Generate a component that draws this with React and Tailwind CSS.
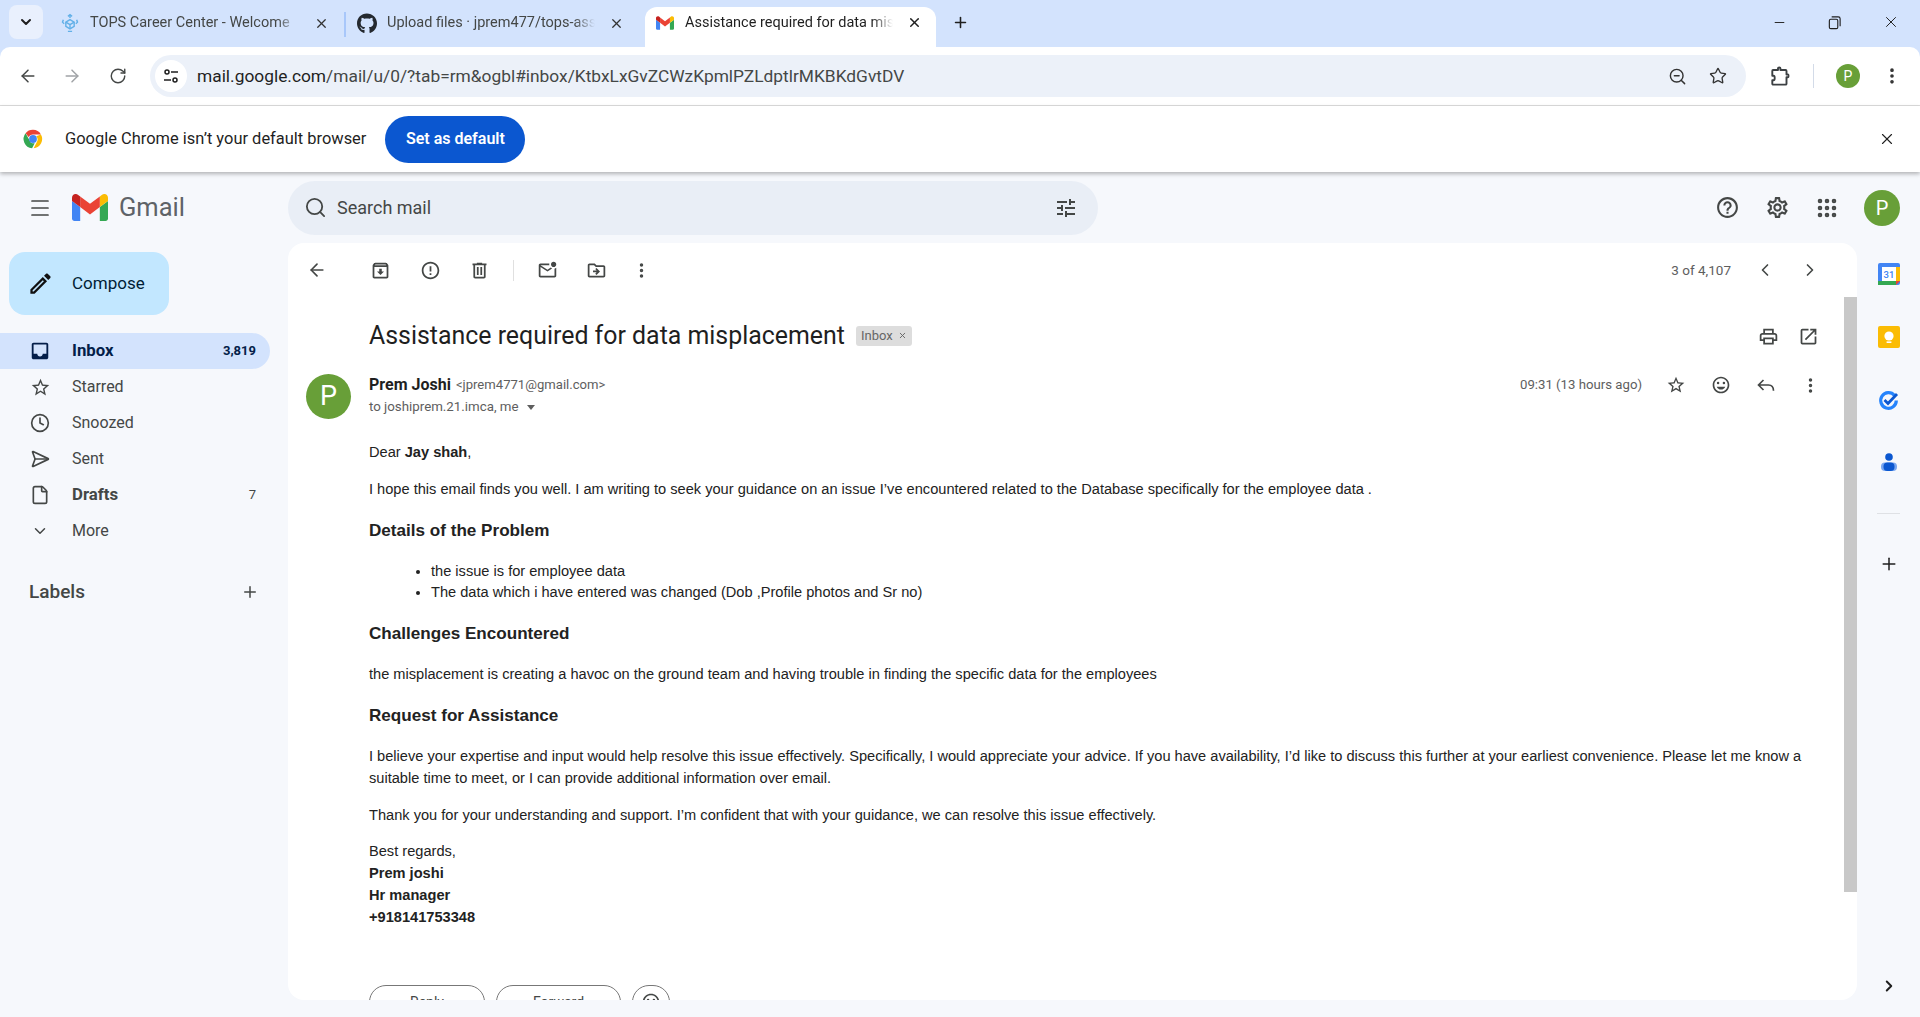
import { FaGithub } from 'react-icons/fa'
import { Plus, X, ChevronDown, ArrowLeft, ArrowRight, RotateCw, Minus, Search, ZoomOut, Star, ChevronLeft, ChevronRight, Menu, Clock, SendHorizontal, File, EllipsisVertical, Grip } from 'lucide-react'

const roboto = { fontFamily: 'Roboto, sans-serif' }

function Mat({ d, size = 24, className = '', children }) {
  return (
    <svg viewBox="0 0 24 24" width={size} height={size} className={`shrink-0 fill-current ${className}`}>
      {d && <path d={d} />}
      {children}
    </svg>
  )
}

const ICONS = {
  archive: 'M20.54 5.23l-1.39-1.68C18.88 3.21 18.47 3 18 3H6c-.47 0-.88.21-1.16.55L3.46 5.23C3.17 5.57 3 6.02 3 6.5V19c0 1.1.9 2 2 2h14c1.1 0 2-.9 2-2V6.5c0-.48-.17-.93-.46-1.27zM6.24 5h11.52l.81.97H5.44l.8-.97zM5 19V8h14v11H5zm8.45-9h-2.9v3H8l4 4 4-4h-2.55z',
  report: 'M12 2C6.48 2 2 6.48 2 12s4.48 10 10 10 10-4.48 10-10S17.52 2 12 2zm0 18c-4.41 0-8-3.59-8-8s3.59-8 8-8 8 3.59 8 8-3.59 8-8 8zm-1-5h2v2h-2zm0-8h2v6h-2z',
  trash: 'M15 4V3H9v1H4v2h1v13c0 1.1.9 2 2 2h10c1.1 0 2-.9 2-2V6h1V4h-5zm2 15H7V6h10v13zM9 8h2v9H9zm4 0h2v9h-2z',
  unread: 'M22 8.98V18c0 1.1-.9 2-2 2H4c-1.1 0-2-.9-2-2V6c0-1.1.9-2 2-2h10.1c-.06.32-.1.66-.1 1s.04.68.1 1H4l8 5 3.67-2.29c.47.43 1.02.76 1.63.98L12 13 4 8v10h16V9.9c.74-.15 1.42-.48 2-.92zM16 5c0 1.66 1.34 3 3 3s3-1.34 3-3-1.34-3-3-3-3 1.34-3 3z',
  move: 'M20 6h-8l-2-2H4c-1.1 0-1.99.9-1.99 2L2 18c0 1.1.9 2 2 2h16c1.1 0 2-.9 2-2V8c0-1.1-.9-2-2-2zm0 12H4V6h5.17l2 2H20v10zm-7.84-6H8v2h4.16l-1.59 1.59L12 17l4-4-4-4-1.41 1.41z',
  print: 'M19 8h-1V3H6v5H5c-1.66 0-3 1.34-3 3v6h4v4h12v-4h4v-6c0-1.66-1.34-3-3-3zM8 5h8v3H8V5zm8 12v2H8v-4h8v2zm2-2v-2H6v2H4v-4c0-.55.45-1 1-1h14c.55 0 1 .45 1 1v4h-2z',
  open: 'M19 19H5V5h7V3H5a2 2 0 00-2 2v14a2 2 0 002 2h14c1.1 0 2-.9 2-2v-7h-2v7zM14 3v2h3.59l-9.83 9.83 1.41 1.41L19 6.41V10h2V3h-7z',
  star: 'M22 9.24l-7.19-.62L12 2 9.19 8.63 2 9.24l5.46 4.73L5.82 21 12 17.27 18.18 21l-1.63-7.03L22 9.24zM12 15.4l-3.76 2.27 1-4.28-3.32-2.88 4.38-.38L12 6.1l1.71 4.04 4.38.38-3.32 2.88 1 4.28L12 15.4z',
  smile: 'M11.99 2C6.47 2 2 6.48 2 12s4.47 10 9.99 10C17.52 22 22 17.52 22 12S17.52 2 11.99 2zM12 20c-4.42 0-8-3.58-8-8s3.58-8 8-8 8 3.58 8 8-3.58 8-8 8zm3.5-9a1.5 1.5 0 100-3 1.5 1.5 0 000 3zm-7 0a1.5 1.5 0 100-3 1.5 1.5 0 000 3zm3.5 6.5c2.33 0 4.3-1.46 5.11-3.5H6.89c.8 2.04 2.78 3.5 5.11 3.5z',
  tune: 'M3 17v2h6v-2H3zM3 5v2h10V5H3zm10 16v-2h8v-2h-8v-2h-2v6h2zM7 9v2H3v2h4v2h2V9H7zm14 4v-2H11v2h10zm-6-4h2V7h4V5h-4V3h-2v6z',
  help: 'M11 18h2v-2h-2v2zm1-16C6.48 2 2 6.48 2 12s4.48 10 10 10 10-4.48 10-10S17.52 2 12 2zm0 18c-4.41 0-8-3.59-8-8s3.59-8 8-8 8 3.59 8 8-3.59 8-8 8zm0-14c-2.21 0-4 1.79-4 4h2c0-1.1.9-2 2-2s2 .9 2 2c0 2-3 1.75-3 5h2c0-2.25 3-2.5 3-5 0-2.21-1.79-4-4-4z',
  gear: 'M19.43 12.98c.04-.32.07-.64.07-.98 0-.34-.03-.66-.07-.98l2.11-1.65c.19-.15.24-.42.12-.64l-2-3.46c-.09-.16-.26-.25-.44-.25-.06 0-.12.01-.17.03l-2.49 1c-.52-.4-1.08-.73-1.69-.98l-.38-2.65C14.46 2.18 14.25 2 14 2h-4c-.25 0-.46.18-.49.42l-.38 2.65c-.61.25-1.17.59-1.69.98l-2.49-1c-.06-.02-.12-.03-.18-.03-.17 0-.34.09-.43.25l-2 3.46c-.13.22-.07.49.12.64l2.11 1.65c-.04.32-.07.65-.07.98 0 .33.03.66.07.98l-2.11 1.65c-.19.15-.24.42-.12.64l2 3.46c.09.16.26.25.44.25.06 0 .12-.01.17-.03l2.49-1c.52.4 1.08.73 1.69.98l.38 2.65c.03.24.24.42.49.42h4c.25 0 .46-.18.49-.42l.38-2.65c.61-.25 1.17-.59 1.69-.98l2.49 1c.06.02.12.03.18.03.17 0 .34-.09.43-.25l2-3.46c.12-.22.07-.49-.12-.64l-2.11-1.65zm-1.98-1.71c.04.31.05.52.05.73 0 .21-.02.43-.05.73l-.14 1.13.89.7 1.08.84-.7 1.21-1.27-.51-1.04-.42-.9.68c-.43.32-.84.56-1.25.73l-1.06.43-.16 1.13-.2 1.35h-1.4l-.19-1.35-.16-1.13-1.06-.43c-.43-.18-.83-.41-1.23-.71l-.91-.7-1.06.43-1.27.51-.7-1.21 1.08-.84.89-.7-.14-1.13c-.03-.31-.05-.54-.05-.74s.02-.43.05-.73l.14-1.13-.89-.7-1.08-.84.7-1.21 1.27.51 1.04.42.9-.68c.43-.32.84-.56 1.25-.73l1.06-.43.16-1.13.2-1.35h1.39l.19 1.35.16 1.13 1.06.43c.43.18.83.41 1.23.71l.91.7 1.06-.43 1.27-.51.7 1.21-1.07.85-.89.7.14 1.13zM12 8c-2.21 0-4 1.79-4 4s1.79 4 4 4 4-1.79 4-4-1.79-4-4-4zm0 6c-1.1 0-2-.9-2-2s.9-2 2-2 2 .9 2 2-.9 2-2 2z',
  inbox: 'M19 3H5c-1.1 0-2 .9-2 2v14c0 1.1.9 2 2 2h14c1.1 0 2-.9 2-2V5c0-1.1-.9-2-2-2zm0 12h-4c0 1.66-1.34 3-3 3s-3-1.34-3-3H5V5h14v10z',
  pencil: 'M14.06 9.02l.92.92L5.92 19H5v-.92l9.06-9.06M17.66 3c-.25 0-.51.1-.7.29l-1.83 1.83 3.75 3.75 1.83-1.83c.39-.39.39-1.02 0-1.41l-2.34-2.34c-.2-.2-.45-.29-.71-.29zm-3.6 3.19L3 17.25V21h3.75L17.81 9.94l-3.75-3.75z',
}

function GmailLogo({ className }) {
  return (
    <svg viewBox="52 42 88 66" className={className}>
      <path fill="#4285f4" d="M58 108h14V74L52 59v43c0 3.32 2.69 6 6 6" />
      <path fill="#34a853" d="M120 108h14c3.32 0 6-2.69 6-6V59l-20 15" />
      <path fill="#fbbc04" d="M120 48v26l20-15v-8c0-7.42-8.47-11.65-14.4-7.2" />
      <path fill="#ea4335" d="M72 74V48l24 18 24-18v26L96 92" />
      <path fill="#c5221f" d="M52 51v8l20 15V48l-5.6-4.2c-5.94-4.45-14.4-.22-14.4 7.2" />
    </svg>
  )
}

function ChromeLogo() {
  return (
    <svg viewBox="0 0 48 48" width="22" height="22">
      <path fill="#ea4335" d="M24 4a20 20 0 0 1 17.3 10H24a10 10 0 0 0-9.3 6.3L7.8 11.6A20 20 0 0 1 24 4z" />
      <path fill="#fbbc04" d="M41.3 14A20 20 0 0 1 25.5 44L33 29.5A10 10 0 0 0 34 24a10 10 0 0 0-3-6z" />
      <path fill="#34a853" d="M7.8 11.6l8.6 14.9a10 10 0 0 0 11.3 6.8L22 44A20 20 0 0 1 7.8 11.6z" />
      <circle cx="24" cy="24" r="8.5" fill="#4285f4" />
    </svg>
  )
}

function TopsIcon() {
  return (
    <svg viewBox="0 0 24 24" width="22" height="22" fill="none" stroke="#62b0e8" strokeWidth="1.7">
      <path d="M12 8l5 3v5l-5 3-5-3v-5z" />
      <path d="M7 11l5 3 5-3M12 14v5" />
      <path d="M9.5 4L12 2l2.5 2M12 2v4M4 8l-1 3 2 2M20 8l1 3-2 2M9.5 22H14.5" />
    </svg>
  )
}

function ExtensionIcon() {
  return (
    <svg viewBox="0 0 22 22" width="22" height="22" fill="none" stroke="#3c4043" strokeWidth="1.9" strokeLinejoin="round">
      <path d="M4 5h5V3.2c0-.9 2.4-.9 2.4 0V5h5.2c.5 0 .9.4.9.9V9.5h1.3c1 0 1 2.8 0 2.8h-1.3v6.4c0 .5-.4.9-.9.9H4.2a.9.9 0 0 1-.9-.9v-3.4h1.2c1.6 0 1.6-4.6 0-4.6H3.3V5.9c0-.5.3-.9.7-.9z" />
    </svg>
  )
}

function CalendarIcon() {
  return (
    <svg viewBox="0 0 22 22" width="22" height="22">
      <rect x="0" y="0" width="22" height="22" rx="2" fill="#4285f4" />
      <rect x="4" y="4" width="14" height="14" fill="#fff" />
      <rect x="18" y="4" width="4" height="14" fill="#fbbc04" />
      <rect x="0" y="18" width="18" height="4" fill="#34a853" />
      <path d="M18 18h4l-4 4z" fill="#ea4335" />
      <text x="11" y="15" textAnchor="middle" fontSize="9.5" fontWeight="500" fill="#4285f4" fontFamily="Roboto, sans-serif">31</text>
    </svg>
  )
}

function KeepIcon() {
  return (
    <svg viewBox="0 0 22 22" width="22" height="22">
      <rect width="22" height="22" rx="2" fill="#fbbc04" />
      <circle cx="11" cy="10" r="4.6" fill="#fff" />
      <rect x="8.6" y="15.4" width="4.8" height="1.6" fill="#fff" />
    </svg>
  )
}

function TasksIcon() {
  return (
    <svg viewBox="0 0 22 22" width="22" height="22" fill="none">
      <path d="M16.5 6.5a7.8 7.8 0 1 0 1.8 5" stroke="#2684fc" strokeWidth="3.2" />
      <path d="M6.5 11l3.5 3.5 9-9.5" stroke="#0b57d0" strokeWidth="2.8" />
    </svg>
  )
}

function ContactsIcon() {
  return (
    <svg viewBox="0 0 22 22" width="22" height="22">
      <circle cx="11" cy="5" r="3.8" fill="#0b57d0" />
      <rect x="3" y="10.5" width="16" height="8.5" rx="4" fill="#7aa7f0" />
      <rect x="5.5" y="10.5" width="11" height="8.5" rx="4" fill="#0b57d0" />
    </svg>
  )
}

function Tab({ icon, title, className = '', closeGap = 'ml-[16px]' }) {
  return (
    <div className={`flex items-center h-[40px] pb-[2px] ${className}`}>
      <span className="w-5 flex justify-center shrink-0">{icon}</span>
      <span className="ml-[10px] w-[208px] overflow-hidden whitespace-nowrap text-[14.5px] text-[#444746] [mask-image:linear-gradient(to_right,black_90%,transparent)]">{title}</span>
      <X size={15} strokeWidth={2} className={`${closeGap} text-[#333]`} />
    </div>
  )
}

function NavItem({ icon, label, count, active, bold }) {
  return (
    <div className={`h-9 w-[270px] flex items-center pl-[29px] pr-[14px] rounded-r-full ${active ? 'bg-[#d3e3fd] text-[#041e49]' : 'text-[#444746]'}`}>
      <span className="w-[22px] flex justify-center shrink-0">{icon}</span>
      <span className={`ml-[21px] flex-1 ${active || bold ? 'text-[16.8px] font-bold' : 'text-[16px]'}`}>{label}</span>
      {count && <span className={`text-[13px] ${active ? 'font-bold' : ''}`}>{count}</span>}
    </div>
  )
}

function ToolBtn({ d, className = 'w-[49.5px]' }) {
  return (
    <span className={`flex justify-center text-[#444746] ${className}`}>
      <Mat d={d} size={21} />
    </span>
  )
}

function Chip({ className, children }) {
  return (
    <div className={`h-[34px] rounded-[17px] border border-[#777] shrink-0 flex items-center justify-center gap-[8px] text-[14px] text-[#444746] ${className}`}>
      {children}
    </div>
  )
}

export default function App() {
  return (
    <div className="w-[1920px] h-[1017px] flex flex-col overflow-hidden bg-[#f6f8fc]" style={roboto}>
      {/* tab strip */}
      <div className="h-[47px] bg-[#d3e3fd] flex items-end shrink-0">
        <div className="ml-[9px] mb-[8px] w-[34px] h-[34px] rounded-lg bg-[#e9f0fd] flex items-center justify-center">
          <ChevronDown size={16} strokeWidth={3} className="text-[#1f1f1f]" />
        </div>
        <Tab icon={<TopsIcon />} title="TOPS Career Center - Welcome" className="ml-[17px] mb-[3px]" />
        <div className="ml-[15px] mb-[10px] h-[25px] w-[2px] bg-[#a8c7fa]" />
        <Tab icon={<FaGithub size={21} className="text-[#24292f]" />} title="Upload files · jprem477/tops-assignment" className="ml-[11px] mb-[3px]" closeGap="ml-[14px]" />
        <div className="ml-[21px] w-[291px] h-10 rounded-t-[12px] bg-white flex items-center pl-[10px] pb-[9px]">
          <GmailLogo className="w-[18px] h-[14px] ml-[1px]" />
          <span className="ml-[11px] w-[208px] overflow-hidden whitespace-nowrap text-[14.5px] text-[#1f1f1f] [mask-image:linear-gradient(to_right,black_90%,transparent)]">Assistance required for data misplacement</span>
          <X size={15} strokeWidth={2.4} className="ml-[14px] text-[#1f1f1f]" />
        </div>
        <Plus size={17} strokeWidth={2.2} className="ml-[16px] mb-[16px] text-[#1f1f1f]" />
        <div className="flex-1" />
        <Minus size={15} strokeWidth={1.5} className="mb-[17px] text-[#1f1f1f]" />
        <svg viewBox="0 0 16 16" width="15" height="15" fill="none" stroke="#1f1f1f" strokeWidth="1.2" className="ml-[40px] mb-[17px]">
          <rect x="2.5" y="4.5" width="9" height="10" rx="1.5" />
          <path d="M5 2h7a2 2 0 0 1 2 2v8" />
        </svg>
        <X size={18} strokeWidth={1.3} className="ml-[40px] mr-[20px] mb-[16px] text-[#1f1f1f]" />
      </div>

      {/* chrome toolbar */}
      <div className="h-[59px] shrink-0 bg-[#d3e3fd]">
        <div className="h-[59px] rounded-t-[10px] bg-white border-b border-[#dcdcdc] flex items-center text-[#444746]">
          <ArrowLeft size={20} strokeWidth={1.8} className="ml-[18px]" />
          <ArrowRight size={20} strokeWidth={1.8} className="ml-[24px] text-[#a0a3a6]" />
          <RotateCw size={18} strokeWidth={1.9} className="ml-[27px]" />
          <div className="ml-[23px] w-[1596px] h-[42px] rounded-full bg-[#ecf1f9] flex items-center pl-[5px]">
            <span className="w-[32px] h-[32px] rounded-full bg-white flex items-center justify-center">
              <svg viewBox="0 0 16 16" width="16" height="16" fill="none" stroke="#1f1f1f" strokeWidth="1.5">
                <circle cx="4" cy="4" r="2" />
                <path d="M8 4h7M1 12h7" />
                <circle cx="12" cy="12" r="2" />
              </svg>
            </span>
            <span className="ml-[10px] text-[17.35px] text-[#1f1f1f] whitespace-nowrap">
              mail.google.com<span className="text-[#444746]">/mail/u/0/?tab=rm&amp;ogbl#inbox/KtbxLxGvZCWzKpmlPZLdptlrMKBKdGvtDV</span>
            </span>
            <div className="flex-1" />
            <ZoomOut size={19} strokeWidth={1.8} className="text-[#333]" />
            <Star size={18} strokeWidth={1.8} className="ml-[22px] mr-[19px] text-[#333]" />
          </div>
          <span className="ml-[23px]"><ExtensionIcon /></span>
          <div className="ml-[22px] h-[24px] w-px bg-[#d3dbe8]" />
          <div className="ml-[22px] w-[24px] h-[24px] rounded-full bg-[#689f38] text-white text-[14px] flex items-center justify-center">P</div>
          <EllipsisVertical size={20} strokeWidth={2.4} className="ml-[22px] text-[#333]" />
        </div>
      </div>

      {/* default browser bar */}
      <div className="h-[66px] shrink-0 bg-white flex items-center shadow-[0_2px_4px_rgba(0,0,0,0.28)] relative z-10">
        <span className="ml-[22px]"><ChromeLogo /></span>
        <span className="ml-[21px] text-[16.45px] text-[#1f1f1f]">Google Chrome isn’t your default browser</span>
        <span className="ml-[19px] w-[140px] h-[47px] rounded-full bg-[#0b57d0] text-white text-[16px] font-semibold flex items-center justify-center">Set as default</span>
        <div className="flex-1" />
        <X size={18} strokeWidth={1.5} className="mr-[24px] text-[#1f1f1f]" />
      </div>

      {/* gmail header */}
      <div className="h-[71px] shrink-0 flex items-center">
        <Menu size={24} strokeWidth={1.7} className="ml-[28px] text-[#444746]" />
        <GmailLogo className="ml-[20px] w-[36px] h-[27px]" />
        <span className="ml-[11px] text-[25.5px] text-[#5f6368] w-[169px]">Gmail</span>
        <div className="w-[810px] h-[54px] rounded-full bg-[#e9eef6] flex items-center pl-[16px] pr-[20px]">
          <Search size={23} strokeWidth={1.9} className="text-[#444746]" />
          <span className="ml-[10px] text-[18px] text-[#444746] flex-1">Search mail</span>
          <Mat d={ICONS.tune} size={24} className="text-[#444746]" />
        </div>
        <div className="flex-1" />
        <Mat d={ICONS.help} size={25} className="text-[#444746]" />
        <Mat d={ICONS.gear} size={25} className="ml-[25px] text-[#444746]" />
        <Grip size={24} strokeWidth={2.6} className="ml-[25px] text-[#444746]" />
        <div className="ml-[25px] mr-[20px] w-[36px] h-[36px] rounded-full bg-[#689f38] text-white text-[20px] flex items-center justify-center">P</div>
      </div>

      <div className="flex-1 flex min-h-0 pb-[17px]">
        {/* sidebar */}
        <aside className="w-[288px] shrink-0 pt-[9px]">
          <div className="ml-[9px] w-[160px] h-[63px] rounded-2xl bg-[#c2e7ff] flex items-center text-[#001d35]">
            <Mat d={ICONS.pencil} size={27} className="ml-[18px] text-[#111]" />
            <span className="ml-[18px] text-[17px] font-normal">Compose</span>
          </div>
          <nav className="mt-[18px]">
            <NavItem active label="Inbox" count="3,819" icon={<Mat d={ICONS.inbox} size={22} />} />
            <NavItem label="Starred" icon={<Mat d={ICONS.star} size={21} />} />
            <NavItem label="Snoozed" icon={<Clock size={20} strokeWidth={2} />} />
            <NavItem label="Sent" icon={<SendHorizontal size={20} strokeWidth={2} />} />
            <NavItem bold label="Drafts" count="7" icon={<File size={20} strokeWidth={2} />} />
            <NavItem label="More" icon={<ChevronDown size={18} strokeWidth={2} />} />
          </nav>
          <div className="mt-[31px] pl-[29px] pr-[29px] h-[24px] flex items-center justify-between text-[#444746]">
            <span className="text-[19px] font-medium">Labels</span>
            <Plus size={18} strokeWidth={2} />
          </div>
        </aside>

        {/* message card */}
        <main className="w-[1569px] shrink-0 h-full rounded-2xl bg-white flex flex-col overflow-hidden">
          <div className="h-[54px] shrink-0 flex items-center">
            <span className="ml-[19px] w-[49px]"><ArrowLeft size={20} strokeWidth={2} className="text-[#444746]" /></span>
            <ToolBtn d={ICONS.archive} />
            <ToolBtn d={ICONS.report} />
            <ToolBtn d={ICONS.trash} />
            <div className="ml-[8px] h-[21px] w-px bg-[#e0e0e0] mr-[9px]" />
            <ToolBtn d={ICONS.unread} />
            <ToolBtn d={ICONS.move} />
            <EllipsisVertical size={19} strokeWidth={2.4} className="ml-[10px] text-[#444746]" />
            <div className="flex-1" />
            <span className="text-[13.5px] text-[#5e5e5e]">3 of 4,107</span>
            <ChevronLeft size={20} strokeWidth={2} className="ml-[24px] text-[#444746]" />
            <ChevronRight size={20} strokeWidth={2} className="ml-[25px] mr-[37px] text-[#444746]" />
          </div>

          <div className="flex-1 flex min-h-0">
            <div className="flex-1 min-w-0 overflow-hidden">
              <div className="mt-[24px] ml-[81px] mr-[25px] h-[30px] flex items-center">
                <h1 className="text-[24.9px] text-[#1f1f1f]">Assistance required for data misplacement</h1>
                <span className="ml-[11px] mb-[1px] h-[20px] px-[5px] rounded-[3px] bg-[#dddddd] text-[#666] text-[13px] flex items-center gap-[5px]">
                  Inbox <X size={9} strokeWidth={2.5} />
                </span>
                <div className="flex-1" />
                <Mat d={ICONS.print} size={21} className="text-[#444746]" />
                <Mat d={ICONS.open} size={21} className="ml-[19px] text-[#444746]" />
              </div>

              <div className="mt-[23px] ml-[18px] mr-[24px] flex">
                <div className="w-[45px] h-[45px] rounded-full bg-[#689f38] text-white text-[27px] flex items-center justify-center shrink-0">P</div>
                <div className="ml-[18px] flex-1">
                  <div className="h-[22px] flex items-center">
                    <span className="text-[16px] font-bold text-[#1f1f1f]">Prem Joshi</span>
                    <span className="ml-[5px] text-[13.1px] text-[#5e5e5e]">&lt;jprem4771@gmail.com&gt;</span>
                    <div className="flex-1" />
                    <span className="mr-[2px] text-[13.2px] text-[#5e5e5e]">09:31 (13 hours ago)</span>
                    <Mat d={ICONS.star} size={20} className="ml-[22px] text-[#444746]" />
                    <Mat d={ICONS.smile} size={20} className="ml-[25px] text-[#444746]" />
                    <svg viewBox="0 0 24 24" width="20" height="20" fill="none" stroke="#444746" strokeWidth="2" className="ml-[25px]">
                      <path d="M9 6l-6 6 6 6M3 12h12c4 0 6 3 6 7" />
                    </svg>
                    <EllipsisVertical size={19} strokeWidth={2.4} className="ml-[25px] text-[#444746]" />
                  </div>
                  <div className="mt-[1px] h-[20px] flex items-center text-[13.3px] text-[#5e5e5e]">
                    to joshiprem.21.imca, me
                    <span className="ml-[8px] w-0 h-0 border-x-[4.5px] border-x-transparent border-t-[5px] border-t-[#5e5e5e]" />
                  </div>
                </div>
              </div>

              <div className="ml-[81px] mr-[40px] mt-[22px] text-[14.62px] leading-[22px] text-[#222]" style={{ fontFamily: '"Liberation Sans", Arial, sans-serif' }}>
                <p>Dear <b>Jay shah</b>,</p>
                <p className="mt-[15px]">I hope this email finds you well. I am writing to seek your guidance on an issue I’ve encountered related to the Database specifically for the employee data .</p>
                <h3 className="mt-[20px] text-[17.1px] font-bold">Details of the Problem</h3>
                <ul className="mt-[19px] ml-[62px] list-disc leading-[21px]">
                  <li>the issue is for employee data</li>
                  <li>The data which i have entered was changed (Dob ,Profile photos and Sr no)</li>
                </ul>
                <h3 className="mt-[20px] text-[17.1px] font-bold">Challenges Encountered</h3>
                <p className="mt-[18px]">the misplacement is creating a havoc on the ground team and having trouble in finding the specific data for the employees</p>
                <h3 className="mt-[20px] text-[17.1px] font-bold">Request for Assistance</h3>
                <p className="mt-[18px]">I believe your expertise and input would help resolve this issue effectively. Specifically, I would appreciate your advice. If you have availability, I’d like to discuss this further at your earliest convenience. Please let me know a suitable time to meet, or I can provide additional information over email.</p>
                <p className="mt-[15px]">Thank you for your understanding and support. I’m confident that with your guidance, we can resolve this issue effectively.</p>
                <p className="mt-[14px]">Best regards,<br /><b>Prem joshi</b><br /><b>Hr manager</b><br /><b>+918141753348</b></p>
              </div>

              <div className="ml-[81px] mt-[57px] flex gap-[11px]">
                <Chip className="w-[116px]">Reply</Chip>
                <Chip className="w-[125px]">Forward</Chip>
                <Chip className="w-[38px]"><Mat d={ICONS.smile} size={20} /></Chip>
              </div>
            </div>
            <div className="w-[13px] shrink-0">
              <div className="h-[595px] bg-[#c8c8c8]" />
            </div>
          </div>
        </main>

        {/* add-on rail */}
        <div className="flex-1 flex flex-col items-center pt-[20px]">
          <CalendarIcon />
          <div className="mt-[41px]"><KeepIcon /></div>
          <div className="mt-[41px]"><TasksIcon /></div>
          <div className="mt-[41px]"><ContactsIcon /></div>
          <div className="mt-[39px] w-[23px] h-px bg-[#dfe1e5]" />
          <Plus size={20} strokeWidth={1.8} className="mt-[40px] text-[#1f1f1f]" />
          <div className="flex-1" />
          <ChevronRight size={18} strokeWidth={2.6} className="mb-[5px] text-[#1f1f1f]" />
        </div>
      </div>
    </div>
  )
}
